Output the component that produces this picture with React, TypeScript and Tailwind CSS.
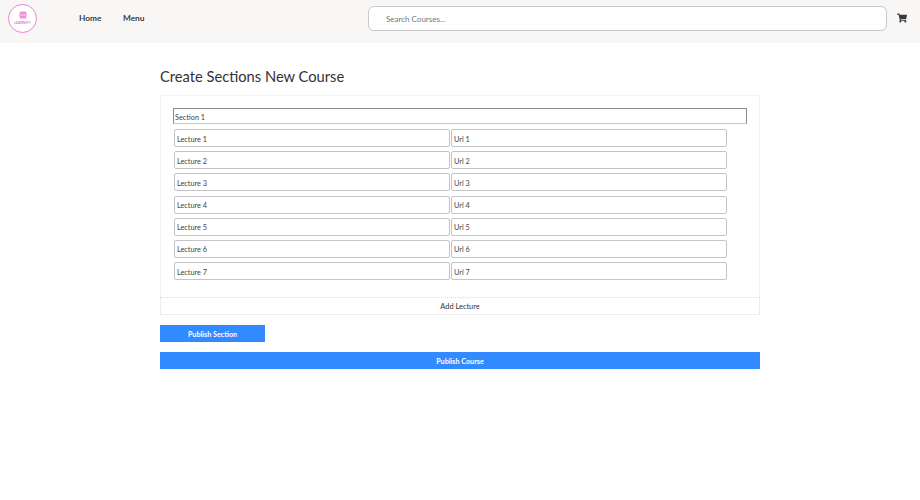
import { FaShoppingCart } from 'react-icons/fa';

const lectures = [1, 2, 3, 4, 5, 6, 7];

function LectureRow({ n }: { n: number }) {
  return (
    <div className="flex h-[18px] gap-px">
      <input
        readOnly
        value={`Lecture ${n}`}
        className="h-[18px] w-[276px] rounded-[2px] border border-[#c4c4c8] bg-white px-[2px] pt-[2px] text-[7.3px] text-[#444] outline-none"
      />
      <input
        readOnly
        value={`Url ${n}`}
        className="h-[18px] w-[276px] rounded-[2px] border border-[#c4c4c8] bg-white px-[2px] pt-[2px] text-[7.3px] text-[#444] outline-none"
      />
    </div>
  );
}

export default function App() {
  return (
    <div className="min-h-[500px] bg-white font-['Lato',sans-serif] text-[#333]">
      <header className="flex h-[43px] items-start bg-[#f8f7f5] bg-[radial-gradient(#eeecea_0.5px,transparent_0.5px)] bg-[length:8px_8px]">
        <div className="flex w-[368px] shrink-0 items-start">
          <div className="ml-2 mt-1 flex h-[29px] w-[29px] flex-col items-center justify-center rounded-full border-[1.5px] border-[#f47fd6] bg-white">
            <svg width="8" height="8" viewBox="0 0 8 8" className="mt-[-1px]">
              <rect x="0.5" y="0.5" width="7" height="7" rx="1.5" fill="#f290dc" />
              <rect x="2.2" y="3.4" width="1.2" height="1.2" fill="#fff" />
              <rect x="4.6" y="3.4" width="1.2" height="1.2" fill="#fff" />
            </svg>
            <span className="mt-[3px] text-[3.5px] leading-none font-bold text-[#ee6fcc]">LEARNIFY</span>
          </div>
          <nav className="ml-[42px] mt-[12px] flex gap-[21.5px] text-[8.3px] leading-[13px] font-bold text-[#3a3a3a]">
            <a>Home</a>
            <a>Menu</a>
          </nav>
        </div>
        <div className="mt-[6px] flex h-[25px] w-[519px] items-center rounded-[6px] border border-[#c9c9cc] bg-white pl-[17px]">
          <input
            placeholder="Search Courses..."
            className="w-full bg-transparent text-[8px] text-[#555] outline-none placeholder:text-[#777]"
          />
        </div>
        <FaShoppingCart className="ml-[10px] mt-[13px] h-[10px] w-[10px] text-[#3a3a3a]" />
      </header>

      <main className="mx-auto w-[600px] pt-[24px]">
        <h1 className="text-[14.7px] leading-[19px] text-[#333]">Create Sections New Course</h1>
        <div className="mt-[9px] h-[202px] border border-b-0 border-[#f3f3f3] pl-[12px] pt-[12px]">
          <input
            readOnly
            value="Section 1"
            className="block h-[16px] w-[574px] border border-[#8e8a86] border-b-[#c8c8c8] bg-white px-px pt-[2px] text-[7.3px] text-[#444] outline-none"
          />
          <div className="ml-px mt-[5px] flex flex-col gap-[4.2px]">
            {lectures.map((n) => (
              <LectureRow key={n} n={n} />
            ))}
          </div>
        </div>
        <button className="block h-[18px] w-full border border-dotted border-[#ddd] pt-[2px] text-center text-[7.4px] leading-[14px] text-[#333]">
          Add Lecture
        </button>
        <button className="mt-[10px] block h-[17px] w-[105px] bg-[#318aff] pt-[3px] text-center text-[7.2px] font-bold text-white">
          Publish Section
        </button>
        <button className="mt-[10px] block h-[17px] w-full bg-[#318aff] pt-[3px] text-center text-[7.2px] font-bold text-white">
          Publish Course
        </button>
      </main>
    </div>
  );
}
